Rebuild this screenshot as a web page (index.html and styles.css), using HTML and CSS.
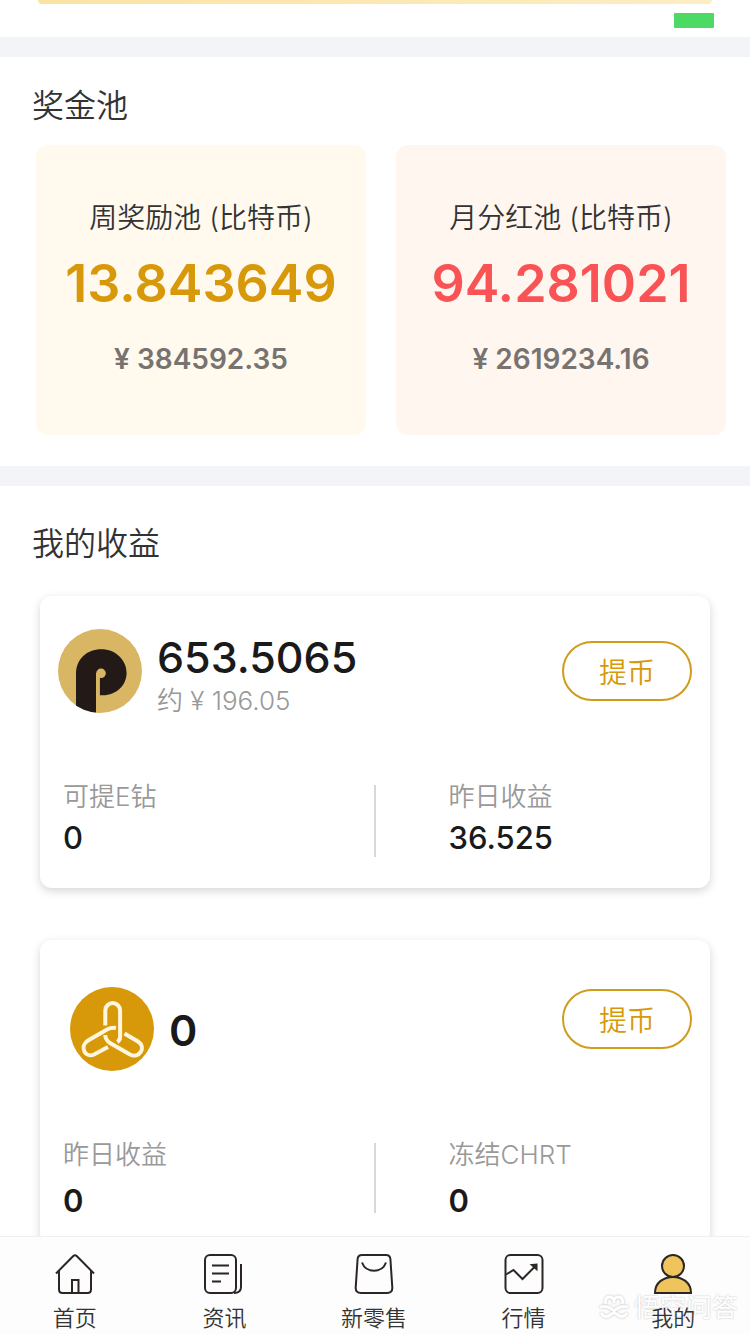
FILE: index.html
```html
<!DOCTYPE html>
<html lang="zh-CN">
<head>
<meta charset="utf-8">
<meta name="viewport" content="width=device-width, initial-scale=1">
<title>我的</title>
<link rel="stylesheet" href="styles.css">
</head>
<body>
<main class="page">
  <div class="top">
    <div class="banner"></div>
    <div class="signal"></div>
  </div>

  <section class="pools">
    <h2 class="title">奖金池</h2>
    <div class="pool-list">
      <article class="pool pool-week">
        <h3 class="pool-name">周奖励池 (比特币)</h3>
        <p class="pool-amount">13.843649</p>
        <p class="pool-value">¥ 384592.35</p>
      </article>
      <article class="pool pool-month">
        <h3 class="pool-name">月分红池 (比特币)</h3>
        <p class="pool-amount">94.281021</p>
        <p class="pool-value">¥ 2619234.16</p>
      </article>
    </div>
  </section>

  <section class="income">
    <h2 class="title">我的收益</h2>
    <article class="card">
      <div class="card-head">
        <svg class="coin" viewBox="0 0 84 84" aria-hidden="true">
          <clipPath id="disc"><circle cx="42" cy="42" r="42"/></clipPath>
          <circle cx="42" cy="42" r="42" fill="#d9b663"/>
          <g clip-path="url(#disc)">
            <path d="M18 84V45C18 30 29 20.3 43.3 20.3S68.600 31 68.600 43.8S58 66.300 45 66.300H41.7V45H38V84Z" fill="#231a17"/>
            <circle cx="43" cy="44.3" r="4.8" fill="#d9b663"/>
            <path d="M38 44h3.7v40H38z" fill="#d9b663"/>
          </g>
        </svg>
        <div class="balance">
          <p class="balance-amount">653.5065</p>
          <p class="balance-value">约 ¥ 196.05</p>
        </div>
        <button class="withdraw" type="button">提币</button>
      </div>
      <dl class="stats">
        <div class="stat"><dt>可提E钻</dt><dd>0</dd></div>
        <div class="stat"><dt>昨日收益</dt><dd>36.525</dd></div>
      </dl>
    </article>

    <article class="card card-chain">
      <div class="card-head">
        <svg class="coin" viewBox="0 0 84 84" aria-hidden="true">
          <circle cx="42" cy="42" r="42" fill="#d7980a"/>
          <g fill="none" stroke="#fff6dc" stroke-width="4">
            <path d="M35.3 38.5V23.5a7.4 7.4 0 0 1 14.8 0V50q0 3-2.800 5"/>
            <path d="M46 41C42 40.300 40 41 37 42.500L18 53.500C9 59 15 71.500 24 67.500L38 60"/>
            <path d="M54.500 46.500L68 54.500C77 60.500 69 72 60 67.500L40 56Q35.500 53 35.200 48"/>
          </g>
        </svg>
        <p class="balance balance-amount">0</p>
        <button class="withdraw" type="button">提币</button>
      </div>
      <dl class="stats">
        <div class="stat"><dt>昨日收益</dt><dd>0</dd></div>
        <div class="stat"><dt>冻结CHRT</dt><dd>0</dd></div>
      </dl>
    </article>
  </section>
</main>

<nav class="tabs">
  <a class="tab" href="#home">
    <svg class="tab-icon" viewBox="0 0 40 40" aria-hidden="true">
      <path d="M1 19.500L18.300 2Q20 .500 21.700 2L39 19.500M4 17V35.500Q4 39 7.500 39H32.500Q36 39 36 35.500V17M17 38.500V26H23.500V38.500"/>
    </svg>
    <span>首页</span>
  </a>
  <a class="tab" href="#news">
    <svg class="tab-icon" viewBox="0 0 40 40" aria-hidden="true">
      <rect x="1" y="1" width="31" height="38" rx="5"/>
      <path d="M37 10V33Q37 39 30 39M8 11.500H25M8 19.500H25M8 27.500H17"/>
    </svg>
    <span>资讯</span>
  </a>
  <a class="tab" href="#shop">
    <svg class="tab-icon" viewBox="0 0 40 40" aria-hidden="true">
      <path d="M8 1H32Q36 1 36.400 5L38.300 33.500Q38.500 39 33 39H7Q1.500 39 1.700 33.500L3.600 5Q4 1 8 1ZM8 8.500C12 19.500 28 19.500 32 8.500"/>
    </svg>
    <span>新零售</span>
  </a>
  <a class="tab" href="#market">
    <svg class="tab-icon" viewBox="0 0 40 40" aria-hidden="true">
      <rect x="1.500" y="1" width="37" height="38" rx="5"/>
      <path d="M2 20.500L9.500 16L18.500 25L31 12.500"/>
      <path d="M28 11L32.500 10.500V15Z" fill="#333"/>
    </svg>
    <span>行情</span>
  </a>
  <a class="tab tab-active" href="#me">
    <svg class="tab-icon" viewBox="0 0 40 40" aria-hidden="true">
      <circle cx="20" cy="12" r="11"/>
      <path d="M2 39C2 17.500 38 17.500 38 39Z"/>
    </svg>
    <span>我的</span>
  </a>
  <div class="watermark">
    <svg class="watermark-logo" viewBox="0 0 30 26" aria-hidden="true">
      <path d="M15 8a4.500 4.500 0 1 0-8 1M15 8a4.500 4.500 0 1 1 8 1M1 12Q9 10 15 16Q21 10 29 12M2 18Q6 24 11 20Q15 16 19 20Q24 24 28 18"/>
    </svg>
    <span>悟空问答</span>
  </div>
</nav>
</body>
</html>
```

FILE: styles.css
```css
* {
  box-sizing: border-box;
}

body {
  display: flex;
  flex-direction: column;
  height: 100vh;
  margin: 0;
  background: #fff;
  color: #333;
  font-family: Inter, "Noto Sans CJK SC", sans-serif;
}

h2, h3, p, dl, dd {
  margin: 0;
  font-weight: 400;
}

.page {
  flex: 1;
  min-height: 0;
  overflow-y: auto;
  scrollbar-width: none;
}

.top {
  display: flex;
  flex-direction: column;
  padding: 0 36px 9px 38px;
}

.banner {
  height: 4px;
  margin-right: 2px;
  border-radius: 0 0 8px 8px;
  background: linear-gradient(90deg, #fbe3a3, #fdedc4);
}

.signal {
  align-self: flex-end;
  width: 40px;
  height: 15px;
  margin-top: 9px;
  border-radius: 1px;
  background: #4cd964;
}

.title {
  font-size: 32px;
  line-height: 50px;
  font-weight: 350;
}

.pools {
  padding: 24px 24px 31px 36px;
  border-top: 20px solid #f3f4f8;
}

.pools .title {
  margin: 0 0 14px -4px;
}

.pool-list {
  display: grid;
  grid-template-columns: 1fr 1fr;
  gap: 30px;
}

.pool {
  padding: 53px 0 47px;
  border-radius: 12px;
  text-align: center;
  white-space: nowrap;
}

.pool-week {
  background: #fff9ee;
}

.pool-month {
  background: #fff6f0;
}

.pool-name {
  font-size: 28px;
  line-height: 40px;
  font-weight: 350;
}

.pool-amount {
  font-size: 52px;
  line-height: 92px;
  font-weight: 600;
}

.pool-week .pool-amount {
  color: #d7980a;
}

.pool-month .pool-amount {
  color: #f95355;
}

.pool-value {
  color: #777370;
  font-size: 28px;
  line-height: 58px;
  font-weight: 600;
}

.income {
  padding: 33px 40px 52px;
  border-top: 20px solid #f3f4f8;
}

.income .title {
  margin: 0 0 27px -8px;
}

.card {
  margin-bottom: 52px;
  padding: 33px 18px 31px;
  border-radius: 12px;
  background: #fff;
  box-shadow: 0 3px 10px rgba(0, 0, 0, 0.17);
}

.card-head {
  display: flex;
  align-items: flex-start;
  margin-bottom: 68px;
}

.coin {
  flex: none;
  width: 84px;
  height: 84px;
}

.balance {
  flex: 1;
  margin-left: 15px;
}

.balance-amount {
  color: #1a1a1a;
  font-size: 43px;
  line-height: 56px;
  font-weight: 500;
}

.balance-value {
  color: #999;
  font-size: 26px;
  line-height: 32px;
  font-weight: 350;
}

.withdraw {
  width: 130px;
  height: 60px;
  margin-top: 12px;
  padding: 0;
  border: 2px solid #d09c1c;
  border-radius: 30px;
  background: none;
  color: #d7980a;
  font-family: inherit;
  font-size: 28px;
  font-weight: 350;
}

.stats {
  display: grid;
  grid-template-columns: 1fr 1fr;
  padding-left: 5px;
}

.stat {
  display: flex;
  flex-direction: column;
  gap: 17px;
  height: 72px;
}

.stat + .stat {
  margin-left: -4px;
  padding-left: 73px;
  border-left: 2px solid #d8d8d8;
}

.stat dt {
  color: #999;
  font-size: 26px;
  line-height: 24px;
  font-weight: 350;
}

.stat dd {
  color: #1a1a1a;
  font-size: 31px;
  line-height: 24px;
  font-weight: 500;
}

.card-chain {
  padding-top: 47px;
}

.card-chain .card-head {
  margin-bottom: 70px;
  padding-left: 12px;
}

.card-chain .balance-amount {
  line-height: 86px;
}

.card-chain .withdraw {
  margin-top: 2px;
}

.card-chain .stat {
  gap: 22px;
  height: 70px;
}

.card-chain .stat dd,
.card-chain .balance-amount {
  font-weight: 600;
}

.tabs {
  position: relative;
  display: grid;
  grid-template-columns: repeat(5, 1fr);
  padding: 17px 2px 0 0;
  border-top: 1px solid #f0f0f0;
  background: #fdfdfd;
}

.tab {
  display: flex;
  flex-direction: column;
  align-items: center;
  gap: 8px;
  color: #333;
  font-size: 22px;
  line-height: 32px;
  font-weight: 350;
  text-decoration: none;
}

.tab-icon {
  width: 40px;
  height: 40px;
  fill: none;
  stroke: #2b2624;
  stroke-width: 2;
}

.tab-active .tab-icon {
  fill: #f0c45c;
}

.tab span {
  position: relative;
  z-index: 1;
}

.watermark {
  position: absolute;
  right: 12px;
  bottom: 8px;
  display: flex;
  align-items: center;
  gap: 5px;
  color: #fff;
  font-size: 26px;
  line-height: 36px;
  text-shadow: 0 0 2px #bbb;
  pointer-events: none;
}

.watermark-logo {
  width: 30px;
  height: 26px;
  fill: none;
  stroke: #fff;
  stroke-width: 3;
  filter: drop-shadow(0 0 1px #bbb);
}
```
